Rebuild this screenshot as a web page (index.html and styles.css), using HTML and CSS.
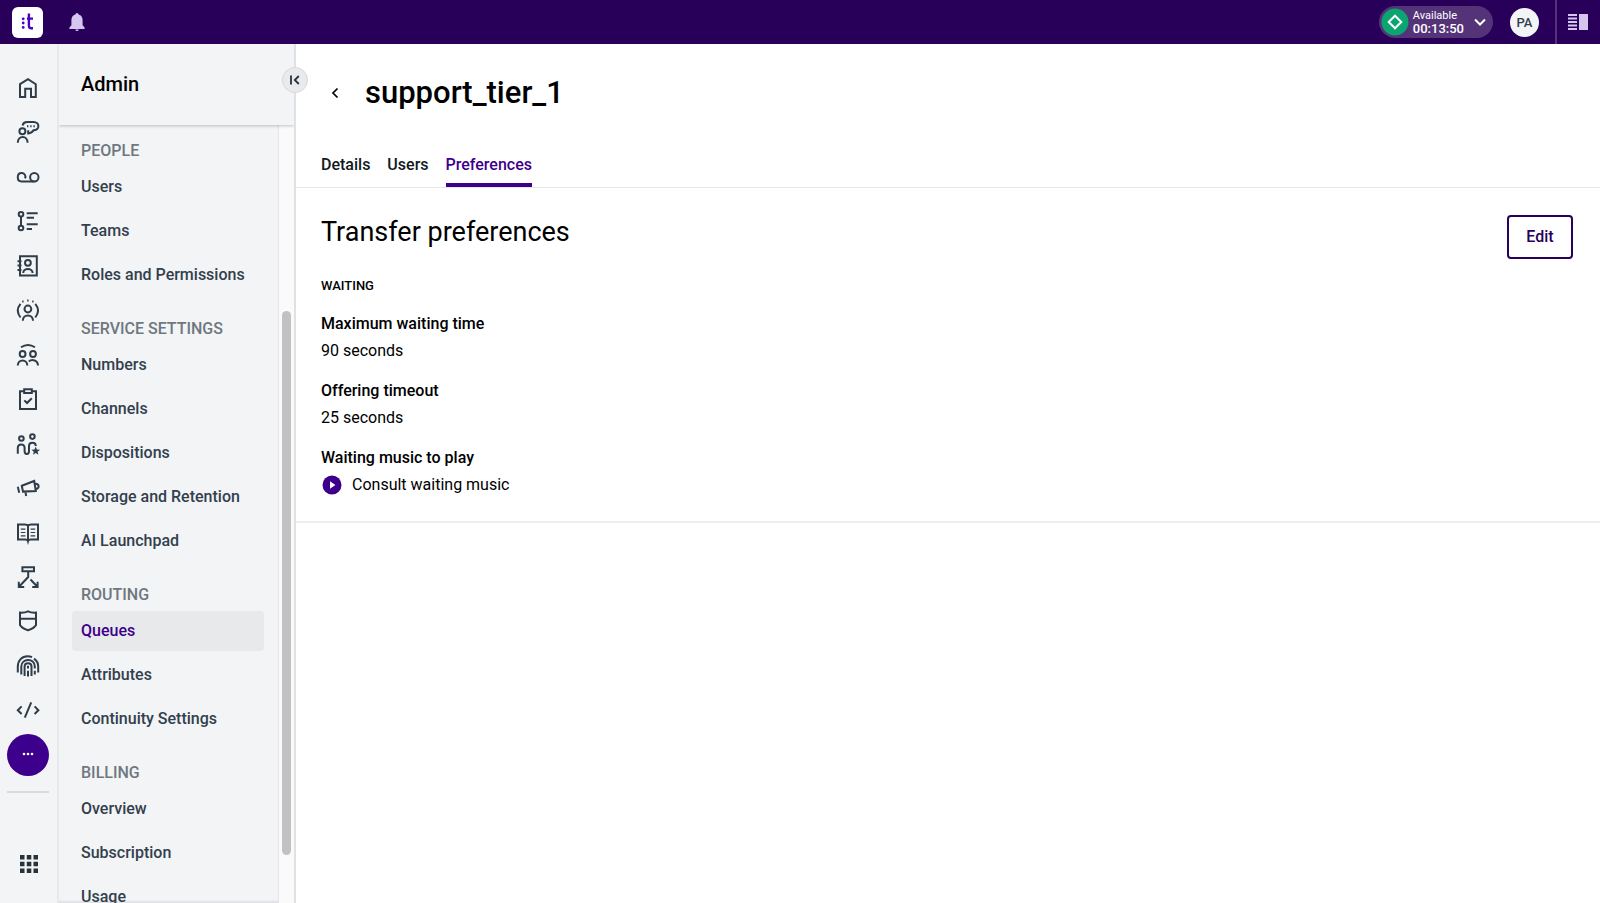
FILE: index.html
```html
<!DOCTYPE html>
<html lang="en">
<head>
<meta charset="utf-8">
<title>support_tier_1 - Admin</title>
<link rel="stylesheet" href="styles.css">
</head>
<body>
<header class="topbar">
  <a class="logo" href="#" aria-label="Home">
    <svg viewBox="0 0 31 31" width="31" height="31"><g fill="#4b00c8"><circle cx="11.2" cy="11.8" r="1.4"/><circle cx="11.2" cy="16" r="1.4"/><circle cx="11.2" cy="20.4" r="1.4"/></g><path d="M16.9 6.4V18.4Q16.9 21.2 19.2 21.2H21M15 11.6H21" fill="none" stroke="#4b00c8" stroke-width="2.4"/></svg>
  </a>
  <button class="icon-button" aria-label="Notifications">
    <svg viewBox="0 0 20 20" width="20" height="20" fill="#d5c6f0"><path d="M10 1a1.6 1.6 0 0 1 1.6 1.5C14.300 3.200 15.600 5.500 15.600 8.200V13.200L17.600 15.600V17H2.400V15.600L4.400 13.200V8.200C4.400 5.500 5.700 3.200 8.400 2.500A1.600 1.600 0 0 1 10 1zM8.300 17.600h3.400a1.700 1.500 0 0 1-3.400 0z"/></svg>
  </button>
  <div class="topbar-end">
    <button class="status">
      <svg viewBox="0 0 28 28" width="28" height="28"><circle cx="14" cy="14" r="13.500" fill="#0ba570"/><path d="M14 7.700 20.300 14 14 20.300 7.700 14z" fill="none" stroke="#fff" stroke-width="2"/></svg>
      <span class="status-text"><span class="status-name">Available</span><span class="status-time">00:13:50</span></span>
      <svg class="status-caret" viewBox="0 0 12 8" width="12" height="8"><path d="M1 1.500 6 6.500 11 1.500" fill="none" stroke="#fff" stroke-width="2"/></svg>
    </button>
    <button class="avatar">PA</button>
    <button class="panel-toggle" aria-label="Toggle panel">
      <svg viewBox="0 0 20 16" width="20" height="16" fill="#d5c6f0"><path d="M0 0h9v2H0zM0 3.500h9v2H0zM0 7h9v2H0zM0 10.500h9v2H0zM0 14h9v2H0zM11 0h9v16h-9z"/></svg>
    </button>
  </div>
</header>
<div class="shell">
  <nav class="rail" aria-label="Applications">
    <ul class="rail-list">
      <li><a href="#" aria-label="Home"><svg class="icon" viewBox="0 0 24 24"><path d="M4 8.200 12 3.200 19.800 8.200V21H15V12.800H9.200V21H4z"/></svg></a></li>
      <li><a href="#" aria-label="Conversations"><svg class="icon" viewBox="0 0 24 24"><circle cx="6.400" cy="11.200" r="3"/><path d="M1.800 22.800C1.800 15 11.600 15 11.600 22.800M6.600 5.400Q7.400 2 11 2H17.500C24 2 24 10.300 17.500 10.300Q16 13.200 12.200 13.400V10.300"/><path d="M11 6.300h1.400M14.200 6.300h1.400M17.400 6.300h1.400"/></svg></a></li>
      <li><a href="#" aria-label="Voicemail"><svg class="icon" viewBox="0 0 24 24"><path d="M9 13.400C10.300 10.800 8.500 8 5.600 8C0.500 8 .5 16.400 5.600 16.400H18.300"/><circle cx="18.300" cy="12.200" r="4.200"/></svg></a></li>
      <li><a href="#" aria-label="Activities"><svg class="icon" viewBox="0 0 24 24"><circle cx="5" cy="5.200" r="2.300"/><circle cx="5" cy="19" r="2.300"/><path d="M5 7.500V16.700M10.700 4.200H21.700M10.700 8.800H18M10.700 15.300H21.700M10.700 20H16"/></svg></a></li>
      <li><a href="#" aria-label="Contacts"><svg class="icon" viewBox="0 0 24 24"><path d="M4 2.200H20.800V21.600H4zM1.500 7.300H5.500M1.500 11.600H5.500M1.500 16H5.500M7.200 19C7.200 13.800 16.600 13.800 16.600 19"/><circle cx="11.900" cy="8.800" r="2.900"/></svg></a></li>
      <li><a href="#" aria-label="Agents"><svg class="icon" viewBox="0 0 24 24"><path d="M4.500 5.800Q-1 12.500 4.500 19.500M19.300 5.800Q24.800 12.500 19.300 19.500M6.800 22.800C6.800 15.600 17 15.600 17 22.800M6.200 3.600h1.400M11.200 2.400h1.400M16.200 3.600h1.400"/><circle cx="11.900" cy="11" r="3.400"/></svg></a></li>
      <li><a href="#" aria-label="Teams"><svg class="icon" viewBox="0 0 24 24"><path d="M5 4.300Q12-.5 19 4.300M1.800 22.500C1.800 15.800 11.300 15.800 11.300 22.500M12.800 18.500C16 15.800 22 17.200 22 22.500"/><circle cx="6.600" cy="11" r="2.900"/><circle cx="17" cy="11" r="2.900"/></svg></a></li>
      <li><a href="#" aria-label="Quality"><svg class="icon" viewBox="0 0 24 24"><path d="M8 4.200H4V22H20V4.200H16M8.200 2.300H15.800V6H8.200zM8.300 13.400 11 16 15.800 11.200"/></svg></a></li>
      <li><a href="#" aria-label="Performance"><svg class="icon" viewBox="0 0 24 24"><circle cx="5.400" cy="6.500" r="2.300"/><circle cx="16.400" cy="4.600" r="2.300"/><path d="M1.800 21.800V16C1.800 11.200 8.600 11.200 8.600 16V19C8.600 23 13 23 13 19V14C13 9.500 19.800 9.500 19.800 14"/><path d="M19.700 14.500 20.900 17.500 24 17.700 21.600 19.700 22.400 22.800 19.700 21.100 17 22.800 17.800 19.700 15.400 17.700 18.500 17.500z" fill="#2f3d4a" stroke="none"/></svg></a></li>
      <li><a href="#" aria-label="Campaigns"><svg class="icon" viewBox="0 0 24 24"><path d="M5.800 9.800 18.200 5 19.800 15 7 15.600zM1.800 10.800 3.200 16.800M19 7.800C23.500 7.200 24 12.800 19.600 12.800M9.400 16 10.200 20"/></svg></a></li>
      <li><a href="#" aria-label="Knowledge"><svg class="icon" viewBox="0 0 24 24"><path d="M12 4.700Q11 3.500 9 3.500H2V18.500H9.500Q11.500 18.500 12 20.300Q12.500 18.500 14.500 18.500H22V3.500H15Q13 3.500 12 4.700V20.300"/><path stroke-width="1.200" d="M4.800 8.200H9.400M4.800 11.500H9.400M4.800 14.800H9.400M14.600 8.200H19.200M14.600 11.500H19.200M14.600 14.800H19.200"/></svg></a></li>
      <li><a href="#" aria-label="Flows"><svg class="icon" viewBox="0 0 24 24"><path d="M6.400 2.200H18V6.200H6.400zM12.200 6.200V12L3 21.700M2.800 16.800V22H8.200M14.500 14.500 21.400 21.700M21.600 16.800V22H16.200"/></svg></a></li>
      <li><a href="#" aria-label="Security"><svg class="icon" viewBox="0 0 24 24"><path d="M4 3.600Q8.500 4 12 2.400Q15.500 4 20 3.600V16Q18.500 19 12 21.300Q5.500 19 4 16zM4 9.800H20"/></svg></a></li>
      <li><a href="#" aria-label="Identity"><svg class="icon" viewBox="0 0 24 24"><path d="M1.800 18.500V12.500C1.800 6.500 6 2.200 11.500 2.200Q14 2.200 16 3.200M18 4.600C20.500 6.300 22.200 9 22.200 12.500V18.500M5.300 20.500V12.500C5.300 4 18.800 3.500 18.800 12.500V14.500M18.800 16.800V20.500M8.600 22V12.500C8.600 8 15.500 8 15.500 12.500V22M12 11.800V14.500M12 16.800V22.500"/></svg></a></li>
      <li><a href="#" aria-label="Developers"><svg class="icon" viewBox="0 0 24 24"><path d="M5.600 8.400 1.800 12.200 5.600 16M18.600 8.400 22.400 12.200 18.600 16M15.200 4.300 8.800 19.600"/></svg></a></li>
      <li><a class="rail-active" href="#" aria-label="Admin"><svg viewBox="0 0 12 6" width="12" height="6" fill="#fff"><circle cx="2" cy="2" r="1.300"/><circle cx="6" cy="2" r="1.300"/><circle cx="10" cy="2" r="1.300"/></svg></a></li>
    </ul>
    <div class="rail-foot">
      <button class="apps" aria-label="All apps"><svg viewBox="0 0 18 18" width="18" height="18" fill="#27323d"><path d="M0 0h4.500v4.500H0zM6.800 0h4.500v4.500H6.800zM13.500 0H18v4.500h-4.500zM0 6.800h4.500v4.500H0zM6.800 6.800h4.500v4.500H6.800zM13.500 6.800H18v4.500h-4.500zM0 13.500h4.500V18H0zM6.800 13.500h4.500V18H6.800zM13.500 13.500H18V18h-4.500z"/></svg></button>
    </div>
  </nav>
  <aside class="panel">
    <div class="panel-head"><h2 class="panel-title">Admin</h2></div>
    <button class="collapse" aria-label="Collapse menu"><svg viewBox="0 0 12 12" width="12" height="12"><path d="M2 1.500V10.500M9.800 2 5.800 6 9.800 10" fill="none" stroke="#27323d" stroke-width="1.800"/></svg></button>
    <div class="panel-body">
      <nav class="menu" aria-label="Admin">
        <section class="group"><h3 class="group-title">PEOPLE</h3>
          <a class="item" href="#">Users</a><a class="item" href="#">Teams</a><a class="item" href="#">Roles and Permissions</a></section>
        <section class="group"><h3 class="group-title">SERVICE SETTINGS</h3>
          <a class="item" href="#">Numbers</a><a class="item" href="#">Channels</a><a class="item" href="#">Dispositions</a><a class="item" href="#">Storage and Retention</a><a class="item" href="#">AI Launchpad</a></section>
        <section class="group"><h3 class="group-title">ROUTING</h3>
          <a class="item item-current" href="#" aria-current="page">Queues</a><a class="item" href="#">Attributes</a><a class="item" href="#">Continuity Settings</a></section>
        <section class="group"><h3 class="group-title">BILLING</h3>
          <a class="item" href="#">Overview</a><a class="item" href="#">Subscription</a><a class="item" href="#">Usage</a></section>
      </nav>
      <div class="track" aria-hidden="true"><div class="thumb"></div></div>
    </div>
  </aside>
  <main class="main">
    <div class="page-head">
      <button class="back" aria-label="Back"><svg viewBox="0 0 10 12" width="10" height="12"><path d="M7.500 1.500 3 6 7.500 10.500" fill="none" stroke="#000" stroke-width="1.700"/></svg></button>
      <h1 class="page-title">support_tier_1</h1>
    </div>
    <nav class="tabs" aria-label="Queue">
      <a class="tab" href="#">Details</a><a class="tab" href="#">Users</a><a class="tab tab-current" href="#" aria-current="page">Preferences</a>
    </nav>
    <section class="card">
      <div class="card-head"><h2 class="card-title">Transfer preferences</h2><button class="edit">Edit</button></div>
      <h3 class="subhead">WAITING</h3>
      <dl class="fields">
        <div class="field"><dt>Maximum waiting time</dt><dd>90 seconds</dd></div>
        <div class="field"><dt>Offering timeout</dt><dd>25 seconds</dd></div>
        <div class="field"><dt>Waiting music to play</dt><dd class="music"><button class="play" aria-label="Play"><svg viewBox="0 0 20 20" width="20" height="20"><circle cx="10" cy="10" r="9.500" fill="#3d008c"/><path d="M8 6.200V13.800L13.400 10z" fill="#fff"/></svg></button>Consult waiting music</dd></div>
      </dl>
    </section>
  </main>
</div>
</body>
</html>
```
FILE: styles.css
```css
* { box-sizing: border-box; margin: 0; padding: 0; }
body {
  font: 400 16px/24px Roboto, "Liberation Sans", sans-serif;
  color: #000;
  background: #fff;
  height: 100vh;
  display: flex;
  flex-direction: column;
  overflow: hidden;
}
button { font: inherit; color: inherit; background: none; border: 0; cursor: pointer; }
a { color: inherit; text-decoration: none; }
ul { list-style: none; }
svg { display: block; flex: none; }

.topbar { flex: none; display: flex; align-items: center; height: 44px; padding-left: 12px; background: #28005a; }
.logo { width: 31px; height: 31px; border-radius: 6px; background: #fff; }
.icon-button { margin-left: 24px; }
.topbar-end { display: flex; align-items: center; align-self: stretch; margin-left: auto; }
.status { display: flex; align-items: center; height: 32px; padding: 0 7px 0 2px; border-radius: 16px; background: #553379; color: #fff; text-align: left; }
.status-text { display: flex; flex-direction: column; margin-left: 4px; }
.status-name { font-size: 11px; line-height: 13px; }
.status-time { font-size: 13px; line-height: 14px; font-weight: 500; }
.status-caret { margin-left: 10px; }
.avatar { width: 29px; height: 29px; margin: 0 16px 0 17px; border-radius: 50%; background: #f2f4f5; color: #32404e; font-size: 13px; line-height: 29px; font-weight: 500; }
.panel-toggle { align-self: stretch; padding: 0 12px 0 11px; border-left: 2px solid #553379; }

.shell { flex: 1; min-height: 0; display: flex; }
.rail { flex: none; display: flex; flex-direction: column; width: 59px; padding-top: 22px; background: #f2f4f5; border-right: 2px solid #e7e9eb; }
.rail-list { flex: 1; display: flex; flex-direction: column; justify-content: space-between; padding: 0 0 0 6px; }
.rail-list a { display: flex; align-items: center; justify-content: center; width: 44px; height: 44px; }
.rail-list .rail-active { width: 42px; height: 42px; margin: 1px; border-radius: 50%; background: #3d008c; }
.icon { width: 24px; height: 24px; fill: none; stroke: #2f3d4a; stroke-width: 2px; }
.rail-foot { flex: none; height: 112px; margin: 14px 8px 0 7px; border-top: 2px solid #d8dadd; }
.apps { display: flex; justify-content: center; width: 44px; padding-top: 62px; }

.panel { flex: none; position: relative; display: flex; flex-direction: column; width: 237px; background: #f2f4f5; border-right: 2px solid #dfe1e4; }
.panel-head { flex: none; height: 81px; padding: 28px 22px 0; box-shadow: 0 1px 3px rgba(0, 0, 0, .22); clip-path: inset(0 0 -5px 0); z-index: 1; }
.panel-title { font-size: 20px; line-height: 24px; font-weight: 500; }
.collapse { position: absolute; top: 23px; right: -14px; z-index: 2; display: flex; align-items: center; justify-content: center; width: 26px; height: 26px; border: 1px solid #d5d7da; border-radius: 50%; background: #e9eaec; }
.panel-body { flex: 1; min-height: 0; display: flex; }
.menu { flex: 1; overflow: hidden; padding: 14px 14px 0 13px; box-shadow: inset 0 -3px 2px -1px #dfe1e4; }
.group { display: flex; flex-direction: column; gap: 4px; margin-bottom: 22px; }
.group-title { height: 24px; padding-left: 9px; font-size: 16px; line-height: 24px; font-weight: 500; color: #6f7780; }
.item { height: 40px; padding-left: 9px; border-radius: 4px; font-weight: 500; line-height: 40px; color: #32404e; }
.item-current { background: #e8e9eb; color: #3d008c; }
.track { flex: none; display: flex; flex-direction: column; width: 16px; padding: 0 3px; border-left: 1px solid #e4e5e7; background: #fafafa; }
.track::before { content: ""; flex: 186; }
.thumb { flex: 543; border-radius: 5px; background: #c1c1c1; }
.track::after { content: ""; flex: 48; }

.main { flex: 1; min-width: 0; }
.page-head { display: flex; align-items: center; height: 98px; padding: 0 26px; }
.back { width: 26px; height: 26px; padding: 0 8px; }
.page-title { margin-left: 17px; font-size: 31px; line-height: 40px; font-weight: 500; }
.tabs { display: flex; gap: 17px; height: 46px; padding: 0 25px; border-bottom: 1px solid #e4e6e8; }
.tab { padding-top: 11px; font-weight: 500; color: #101820; }
.tab-current { border-bottom: 4px solid #3d008c; color: #3d008c; }
.card { padding: 27px 27px 23px 25px; border-bottom: 2px solid #eceef0; }
.card-head { display: flex; justify-content: space-between; }
.card-title { font-size: 27px; line-height: 34px; font-weight: 400; }
.edit { width: 66px; height: 44px; border: 2px solid #28005a; border-radius: 4px; color: #28005a; font-weight: 500; }
.subhead { margin-top: 15px; font-size: 13px; line-height: 24px; font-weight: 500; }
.fields { display: flex; flex-direction: column; gap: 13px; margin-top: 12px; }
.field { line-height: 27px; }
.field dt { font-weight: 500; }
.music { display: flex; align-items: center; gap: 10px; }
.play { padding-left: 1px; }
```
